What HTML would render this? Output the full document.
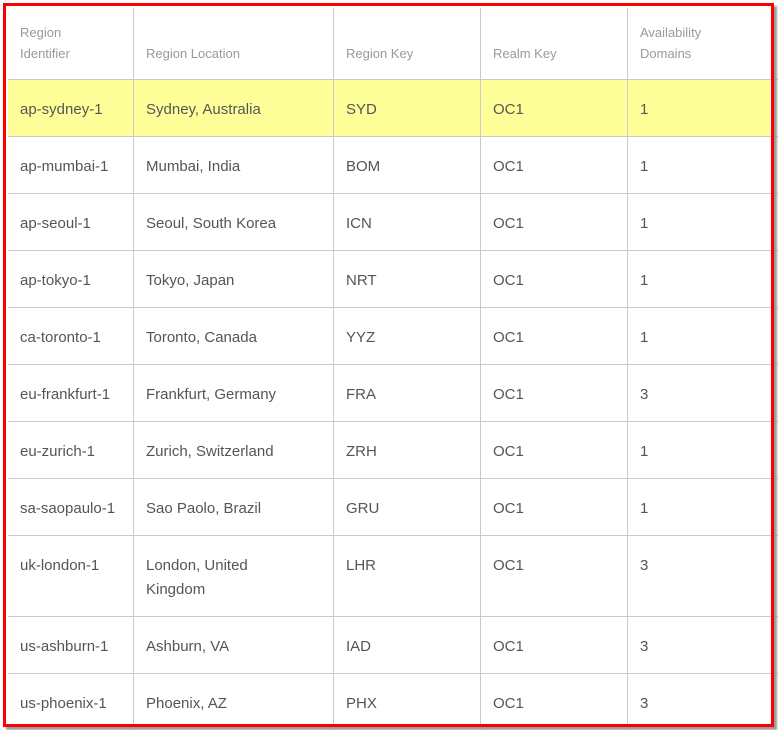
<!DOCTYPE html>
<html><head><style>
body{margin:0;width:778px;height:730px;background:#fff;position:relative;overflow:hidden;font-family:"Liberation Sans",sans-serif;}
.v{position:absolute;top:8px;width:1px;height:722px;background:#c5ccd6}
.h{position:absolute;left:8px;width:770px;height:1px;background:#c5ccd6}
.t{position:absolute;font-size:15px;color:#555;line-height:24px;white-space:nowrap;margin-top:2px}
.hd{position:absolute;font-size:13px;color:#9a9a9a;line-height:21px}
#red{position:absolute;left:3px;top:3px;width:765px;height:718px;border:3px solid #f00;box-shadow:3px 3px 2px #999}
</style></head><body>
<div style="position:absolute;left:8px;top:80px;width:762px;height:56px;background:#ffff99"></div>
<div class="v" style="left:133px"></div><div class="v" style="left:333px"></div><div class="v" style="left:480px"></div><div class="v" style="left:627px"></div>
<div class="h" style="top:79px"></div><div class="h" style="top:136px"></div><div class="h" style="top:193px"></div><div class="h" style="top:250px"></div><div class="h" style="top:307px"></div><div class="h" style="top:364px"></div><div class="h" style="top:421px"></div><div class="h" style="top:478px"></div><div class="h" style="top:535px"></div><div class="h" style="top:616px"></div><div class="h" style="top:673px"></div>
<div class="hd" style="left:20px;top:22px">Region<br>Identifier</div>
<div class="hd" style="left:146px;top:43px">Region Location</div>
<div class="hd" style="left:346px;top:43px">Region Key</div>
<div class="hd" style="left:493px;top:43px">Realm Key</div>
<div class="hd" style="left:640px;top:22px">Availability<br>Domains</div>
<div class="t" style="left:20px;top:96px">ap-sydney-1</div><div class="t" style="left:146px;top:96px">Sydney, Australia</div><div class="t" style="left:346px;top:96px">SYD</div><div class="t" style="left:493px;top:96px">OC1</div><div class="t" style="left:640px;top:96px">1</div>
<div class="t" style="left:20px;top:153px">ap-mumbai-1</div><div class="t" style="left:146px;top:153px">Mumbai, India</div><div class="t" style="left:346px;top:153px">BOM</div><div class="t" style="left:493px;top:153px">OC1</div><div class="t" style="left:640px;top:153px">1</div>
<div class="t" style="left:20px;top:210px">ap-seoul-1</div><div class="t" style="left:146px;top:210px">Seoul, South Korea</div><div class="t" style="left:346px;top:210px">ICN</div><div class="t" style="left:493px;top:210px">OC1</div><div class="t" style="left:640px;top:210px">1</div>
<div class="t" style="left:20px;top:267px">ap-tokyo-1</div><div class="t" style="left:146px;top:267px">Tokyo, Japan</div><div class="t" style="left:346px;top:267px">NRT</div><div class="t" style="left:493px;top:267px">OC1</div><div class="t" style="left:640px;top:267px">1</div>
<div class="t" style="left:20px;top:324px">ca-toronto-1</div><div class="t" style="left:146px;top:324px">Toronto, Canada</div><div class="t" style="left:346px;top:324px">YYZ</div><div class="t" style="left:493px;top:324px">OC1</div><div class="t" style="left:640px;top:324px">1</div>
<div class="t" style="left:20px;top:381px">eu-frankfurt-1</div><div class="t" style="left:146px;top:381px">Frankfurt, Germany</div><div class="t" style="left:346px;top:381px">FRA</div><div class="t" style="left:493px;top:381px">OC1</div><div class="t" style="left:640px;top:381px">3</div>
<div class="t" style="left:20px;top:438px">eu-zurich-1</div><div class="t" style="left:146px;top:438px">Zurich, Switzerland</div><div class="t" style="left:346px;top:438px">ZRH</div><div class="t" style="left:493px;top:438px">OC1</div><div class="t" style="left:640px;top:438px">1</div>
<div class="t" style="left:20px;top:495px">sa-saopaulo-1</div><div class="t" style="left:146px;top:495px">Sao Paolo, Brazil</div><div class="t" style="left:346px;top:495px">GRU</div><div class="t" style="left:493px;top:495px">OC1</div><div class="t" style="left:640px;top:495px">1</div>
<div class="t" style="left:20px;top:552px">uk-london-1</div><div class="t" style="left:146px;top:552px">London, United<br>Kingdom</div><div class="t" style="left:346px;top:552px">LHR</div><div class="t" style="left:493px;top:552px">OC1</div><div class="t" style="left:640px;top:552px">3</div>
<div class="t" style="left:20px;top:633px">us-ashburn-1</div><div class="t" style="left:146px;top:633px">Ashburn, VA</div><div class="t" style="left:346px;top:633px">IAD</div><div class="t" style="left:493px;top:633px">OC1</div><div class="t" style="left:640px;top:633px">3</div>
<div class="t" style="left:20px;top:690px">us-phoenix-1</div><div class="t" style="left:146px;top:690px">Phoenix, AZ</div><div class="t" style="left:346px;top:690px">PHX</div><div class="t" style="left:493px;top:690px">OC1</div><div class="t" style="left:640px;top:690px">3</div>
<div id="red"></div>
</body></html>
